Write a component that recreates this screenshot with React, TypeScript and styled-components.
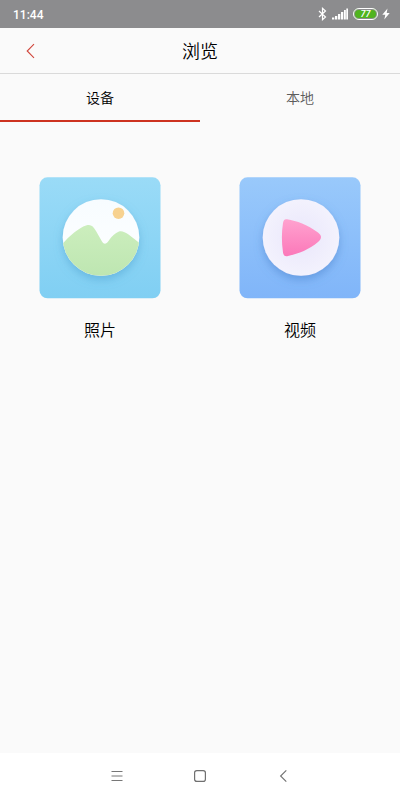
import React, { useState } from "react";
import styled, { createGlobalStyle } from "styled-components";

const GlobalStyle = createGlobalStyle`
  * { box-sizing: border-box; }
  body { margin: 0; background: #fafafa; }
  button { border: 0; padding: 0; background: none; font: inherit; color: inherit; cursor: pointer; }
  svg { display: block; }
`;

const Screen = styled.div`
  min-height: 100vh;
  display: flex;
  flex-direction: column;
  background: #fafafa;
  color: #000;
  font-family: "Noto Sans CJK SC", sans-serif;
  font-weight: 350;
`;

const StatusBar = styled.div`
  height: 28px;
  padding: 0 10px 0 13px;
  display: flex;
  align-items: center;
  justify-content: space-between;
  background: #8c8c8e;
  color: #fff;
`;

const Clock = styled.time`
  padding-top: 1px;
  font: 500 12px/26px Roboto, sans-serif;
`;

const StatusIcons = styled.div`
  display: flex;
  align-items: center;
`;

const Battery = styled.span`
  width: 25px;
  height: 12px;
  margin: 0 4px 0 5px;
  border: 1px solid #fff;
  border-radius: 6px;
  background: #50b41e;
  box-shadow: inset 0 0 0 1px #8c8c8e;
  font: italic 500 9px/10px Roboto, sans-serif;
  text-align: center;
`;

const Header = styled.header`
  height: 46px;
  display: grid;
  grid-template-columns: 60px 1fr 60px;
  border-bottom: 1px solid #dadada;
`;

const BackButton = styled.button`
  display: grid;
  place-items: center;
`;

const Title = styled.h1`
  margin: 0;
  font-size: 18px;
  line-height: 44px;
  font-weight: inherit;
  text-align: center;
`;

const Tabs = styled.div`
  display: grid;
  grid-template-columns: 1fr 1fr;
`;

const Tab = styled.button<{ $active: boolean }>`
  && {
    height: 48px;
    border-bottom: 2px solid ${(p) => (p.$active ? "#cd3320" : "transparent")};
    color: ${(p) => (p.$active ? "#000" : "#5c5c5c")};
    font-size: 14px;
    line-height: 46px;
  }
`;

const Content = styled.main`
  flex: 1;
  padding-top: 55px;
  display: grid;
  grid-template-columns: 1fr 1fr;
  align-items: start;
`;

const Category = styled.button`
  display: flex;
  flex-direction: column;
  align-items: center;
  gap: 18px;
`;

const CategoryLabel = styled.span`
  font-size: 16px;
  line-height: 24px;
`;

const NavBar = styled.nav`
  height: 47px;
  padding: 0 75px 1px;
  display: grid;
  grid-template-columns: repeat(3, 1fr);
  background: #fff;
`;

const NavButton = styled.button`
  display: grid;
  place-items: center;
`;

function PhotoIcon() {
  return (
    <svg width="122" height="122" viewBox="0 0 122 122" aria-hidden="true">
      <defs>
        <linearGradient id="photoTile" x2="0" y2="1">
          <stop stopColor="#9adbf7" />
          <stop offset="1" stopColor="#80cff3" />
        </linearGradient>
        <linearGradient id="photoHill" x2="0" y2="1">
          <stop stopColor="#cceebd" />
          <stop offset="1" stopColor="#bce5b0" />
        </linearGradient>
        <linearGradient id="photoSky" x2="0" y2="1">
          <stop stopColor="#f7fcff" />
          <stop offset="1" stopColor="#ffffff" />
        </linearGradient>
        <clipPath id="photoCircle"><circle cx="62" cy="60.5" r="38.3" /></clipPath>
        <filter id="photoShadow" x="-30%" y="-30%" width="160%" height="160%">
          <feDropShadow dx="0" dy="4" stdDeviation="4" floodColor="#489fcd" floodOpacity="0.5" />
        </filter>
      </defs>
      <rect x="0.5" y="0.3" width="121" height="121" rx="8" fill="url(#photoTile)" />
      <circle cx="62" cy="60.5" r="38.3" fill="url(#photoSky)" filter="url(#photoShadow)" />
      <path
        clipPath="url(#photoCircle)"
        d="M20 71C28 61 39 51 47 48.5C52 47 54 49 57 54L63 64.5C65 67.5 67 67.5 69.5 64C73 59 76 56 80 54.5C85 52.5 93 60 104 69V105H20Z"
        fill="url(#photoHill)"
      />
      <circle cx="79.5" cy="36.2" r="5.8" fill="#f7d290" />
    </svg>
  );
}

function VideoIcon() {
  return (
    <svg width="122" height="122" viewBox="0 0 122 122" aria-hidden="true">
      <defs>
        <linearGradient id="videoTile" x2="0" y2="1">
          <stop stopColor="#99c9fb" />
          <stop offset="1" stopColor="#80b5f9" />
        </linearGradient>
        <linearGradient id="videoPlay" x2="0" y2="1">
          <stop stopColor="#ffa2cf" />
          <stop offset="1" stopColor="#fb78b9" />
        </linearGradient>
        <radialGradient id="videoDisc">
          <stop stopColor="#e9e6fb" />
          <stop offset="1" stopColor="#f3f2fd" />
        </radialGradient>
        <filter id="videoShadow" x="-30%" y="-30%" width="160%" height="160%">
          <feDropShadow dx="0" dy="4" stdDeviation="4" floodColor="#477fc9" floodOpacity="0.5" />
        </filter>
      </defs>
      <rect x="0.5" y="0.3" width="121" height="121" rx="8" fill="url(#videoTile)" />
      <circle cx="62" cy="60.5" r="38.3" fill="url(#videoDisc)" filter="url(#videoShadow)" />
      <path
        d="M48 42.2C58 43.8 68 47.5 79 55.5C83 58.5 83 61.5 79 65C70 72.5 60 76.5 49 79C46 79.7 44.5 78.5 44 75.5C42.5 65 42.5 56 44 46C44.5 43 45.5 41.8 48 42.2Z"
        fill="url(#videoPlay)"
      />
    </svg>
  );
}

const BluetoothIcon = styled.svg`
  margin-right: 5px;
`;

const tabs = ["设备", "本地"];
const categories = [
  { label: "照片", Icon: PhotoIcon },
  { label: "视频", Icon: VideoIcon },
];

export default function App() {
  const [active, setActive] = useState(0);
  return (
    <Screen>
      <GlobalStyle />
      <StatusBar>
        <Clock>11:44</Clock>
        <StatusIcons>
          <BluetoothIcon width="9" height="14" viewBox="0 0 9 14" fill="none" stroke="#fff" strokeWidth="1.2" aria-hidden="true">
            <path d="M1 4L7.5 10L4.5 12.7V1.3L7.5 4L1 10" />
          </BluetoothIcon>
          <svg width="16" height="12" viewBox="0 0 16 12" fill="#fff" aria-hidden="true">
            <path d="M0 9.5h2.3V11.5H0zM3 8h2.3v3.5H3zM6 6h2.3v5.5H6zM9 4h2.3v7.5H9zM12 2h1.8v9.5H12zM14.3 0.5H16v11h-1.7z" />
          </svg>
          <Battery>77</Battery>
          <svg width="8" height="12" viewBox="0 0 8 12" fill="#fff" aria-hidden="true">
            <path d="M5.5 0.5L0.3 6.8H3.3L2.3 11.5L7.7 5H4.7Z" />
          </svg>
        </StatusIcons>
      </StatusBar>
      <Header>
        <BackButton aria-label="返回">
          <svg width="10" height="16" viewBox="0 0 10 16" fill="none" stroke="#d0453b" strokeWidth="1.1" aria-hidden="true">
            <path d="M9 1.2L2.2 8L9 14.8" />
          </svg>
        </BackButton>
        <Title>浏览</Title>
      </Header>
      <Tabs role="tablist">
        {tabs.map((name, i) => (
          <Tab key={name} role="tab" aria-selected={active === i} $active={active === i} onClick={() => setActive(i)}>
            {name}
          </Tab>
        ))}
      </Tabs>
      <Content>
        {categories.map(({ label, Icon }) => (
          <Category key={label}>
            <Icon />
            <CategoryLabel>{label}</CategoryLabel>
          </Category>
        ))}
      </Content>
      <NavBar>
        <NavButton aria-label="菜单">
          <svg width="12" height="12" viewBox="0 0 12 12" stroke="#777" aria-hidden="true">
            <path d="M0.5 1.5h11M0.5 6h11M0.5 10.5h11" />
          </svg>
        </NavButton>
        <NavButton aria-label="主页">
          <svg width="12" height="12" viewBox="0 0 12 12" fill="none" stroke="#707070" strokeWidth="1.2" aria-hidden="true">
            <rect x="0.6" y="0.6" width="10.8" height="10.8" rx="2.2" />
          </svg>
        </NavButton>
        <NavButton aria-label="后退">
          <svg width="8" height="14" viewBox="0 0 8 14" fill="none" stroke="#707070" strokeWidth="1.1" aria-hidden="true">
            <path d="M7.3 1.3L1.6 7L7.3 12.7" />
          </svg>
        </NavButton>
      </NavBar>
    </Screen>
  );
}
